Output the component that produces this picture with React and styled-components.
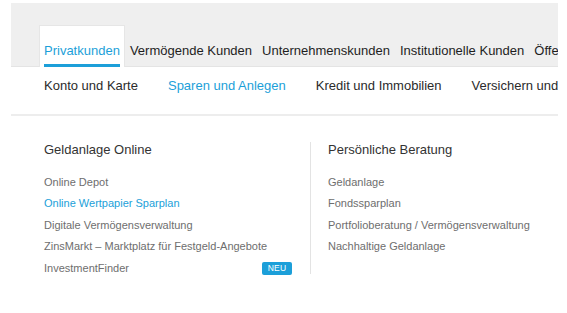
import React from "react";
import styled, { createGlobalStyle } from "styled-components";

const GlobalStyle = createGlobalStyle`
  html, body {
    margin: 0;
    background: #fff;
  }
  body {
    font-family: "Liberation Sans", Arial, sans-serif;
    -webkit-font-smoothing: antialiased;
  }
`

const Page = styled.div`
  padding: 3px 9px 0 11px;
`

const Frame = styled.nav`
  width: 547px;
  overflow: hidden;
`

const TopNav = styled.ul`
  display: flex;
  align-items: flex-end;
  height: 64px;
  margin: 0;
  padding: 0 0 0 28px;
  list-style: none;
  background: #efefef;
  border-bottom: 1px solid #e4e4e4;
  box-sizing: border-box;
  white-space: nowrap;
`

const Tab = styled.li`
  position: relative;
  flex: none;
  height: 42px;
  box-sizing: border-box;
  padding: 17px 4px 0;
  margin-bottom: -1px;
  font-size: 13px;
  line-height: 15px;
  color: ${p => (p.$active ? "#1c9fd9" : "#1e1e1e")};
  background: ${p => (p.$active ? "#fff" : "transparent")};
  border: 1px solid ${p => (p.$active ? "#e6e6e6" : "transparent")};
  border-bottom: 0;
  &::after {
    content: "";
    display: ${p => (p.$active ? "block" : "none")};
    position: absolute;
    left: 4px;
    right: 4px;
    bottom: 0;
    height: 3px;
    background: #1c9fd9;
  }
`

const SubNav = styled.ul`
  display: flex;
  gap: 30px;
  height: 49px;
  margin: 0;
  padding: 11px 0 0 33px;
  list-style: none;
  box-sizing: border-box;
  border-bottom: 2px solid #ededed;
  white-space: nowrap;
`

const SubItem = styled.li`
  flex: none;
  font-size: 13px;
  line-height: 15px;
  color: ${p => (p.$active ? "#1c9fd9" : "#2b2b2b")};
`

const Columns = styled.div`
  display: flex;
  align-items: flex-start;
  padding: 26px 0 0 33px;
`

const Column = styled.section`
  width: ${p => p.$width}px;
  box-sizing: border-box;
  padding: ${p => (p.$divided ? "0 0 0 17px" : "0 18px 0 0")};
  border-left: ${p => (p.$divided ? "1px solid #e3e3e3" : "0")};
`

const Heading = styled.h3`
  margin: 0 0 14px;
  font-size: 13px;
  font-weight: normal;
  line-height: 15px;
  color: #333;
`

const LinkList = styled.ul`
  margin: 0;
  padding: 0;
  list-style: none;
  min-height: ${p => p.$minHeight || 0}px;
`

const LinkRow = styled.li`
  display: flex;
  align-items: center;
  justify-content: space-between;
  height: 21.5px;
  font-size: 11px;
  color: ${p => (p.$active ? "#1c9fd9" : "#6e6e6e")};
  white-space: nowrap;
`

const Badge = styled.span`
  display: inline-block;
  width: 30px;
  height: 13px;
  margin-top: 2px;
  border-radius: 2px;
  background: #1c9fd9;
  color: #fff;
  font-size: 8.5px;
  line-height: 13px;
  text-align: center;
  letter-spacing: 0.2px;
`

const tabs = [
  "Privatkunden",
  "Vermögende Kunden",
  "Unternehmenskunden",
  "Institutionelle Kunden",
  "Öffentliche Kunden",
]

const subItems = [
  "Konto und Karte",
  "Sparen und Anlegen",
  "Kredit und Immobilien",
  "Versichern und Vorsorgen",
]

const onlineLinks = [
  { label: "Online Depot" },
  { label: "Online Wertpapier Sparplan", active: true },
  { label: "Digitale Vermögensverwaltung" },
  { label: "ZinsMarkt – Marktplatz für Festgeld-Angebote" },
  { label: "InvestmentFinder", badge: "NEU" },
]

const adviceLinks = [
  { label: "Geldanlage" },
  { label: "Fondssparplan" },
  { label: "Portfolioberatung / Vermögensverwaltung" },
  { label: "Nachhaltige Geldanlage" },
]

const App = () => {
  return (
    <Page>
      <GlobalStyle />
      <Frame>
        <TopNav>
          {tabs.map((t, i) => (
            <Tab key={t} $active={i === 0}>{t}</Tab>
          ))}
        </TopNav>
        <SubNav>
          {subItems.map((s, i) => (
            <SubItem key={s} $active={i === 1}>{s}</SubItem>
          ))}
        </SubNav>
        <Columns>
          <Column $width={266}>
            <Heading>Geldanlage Online</Heading>
            <LinkList>
              {onlineLinks.map(l => (
                <LinkRow key={l.label} $active={l.active}>
                  {l.label}
                  {l.badge && <Badge>{l.badge}</Badge>}
                </LinkRow>
              ))}
            </LinkList>
          </Column>
          <Column $width={240} $divided>
            <Heading>Persönliche Beratung</Heading>
            <LinkList $minHeight={103}>
              {adviceLinks.map(l => (
                <LinkRow key={l.label}>{l.label}</LinkRow>
              ))}
            </LinkList>
          </Column>
        </Columns>
      </Frame>
    </Page>
  )
}

export default App
